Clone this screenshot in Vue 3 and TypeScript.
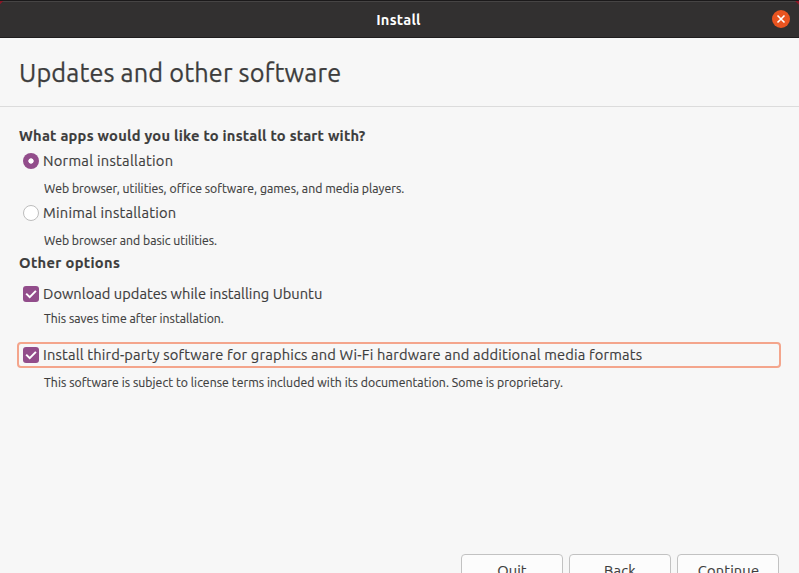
<script setup lang="ts">
import { ref } from 'vue'

const title = 'Updates and other software'
const install = ref<'normal' | 'minimal'>('normal')
const updates = ref(true)
const thirdParty = ref(true)
</script>

<template>
  <main class="window">
    <header class="titlebar">
      <span class="caption">Install</span>
      <button class="close" aria-label="Close">
        <svg width="18" height="18" viewBox="0 0 18 18">
          <circle cx="9" cy="9" r="9" fill="#e95420" />
          <path d="M5.5 5.5l7 7M12.5 5.5l-7 7" stroke="#fff" stroke-width="1.6" />
        </svg>
      </button>
    </header>

    <div class="heading"><h1>{{ title }}</h1></div>

    <section class="content">
      <h2 class="apps">What apps would you like to install to start with?</h2>
      <div class="option normal" @click="install = 'normal'">
        <i class="radio" :class="{ on: install === 'normal' }"></i><span>Normal installation</span>
      </div>
      <p class="normal-note">Web browser, utilities, office software, games, and media players.</p>
      <div class="option minimal" @click="install = 'minimal'">
        <i class="radio" :class="{ on: install === 'minimal' }"></i><span>Minimal installation</span>
      </div>
      <p class="minimal-note">Web browser and basic utilities.</p>
      <h2 class="other">Other options</h2>
      <div class="option updates" @click="updates = !updates">
        <i class="check" :class="{ on: updates }">
          <svg v-if="updates" width="16" height="16" viewBox="0 0 16 16"><path d="M3.2 7.6l3.5 3.5 6.2-6.2" fill="none" stroke="#fff" stroke-width="2" /></svg>
        </i><span>Download updates while installing Ubuntu</span>
      </div>
      <p class="updates-note">This saves time after installation.</p>
      <div class="option third focused" @click="thirdParty = !thirdParty">
        <i class="check" :class="{ on: thirdParty }">
          <svg v-if="thirdParty" width="16" height="16" viewBox="0 0 16 16"><path d="M3.2 7.6l3.5 3.5 6.2-6.2" fill="none" stroke="#fff" stroke-width="2" /></svg>
        </i><span>Install third-party software for graphics and Wi-Fi hardware and additional media formats</span>
      </div>
      <p class="third-note">This software is subject to license terms included with its documentation. Some is proprietary.</p>
    </section>

    <footer class="actions">
      <button class="action quit">Quit</button>
      <button class="action back">Back</button>
      <button class="action continue">Continue</button>
    </footer>
  </main>
</template>

<style>
body { overflow: hidden; }
</style>

<style scoped>
.window {
  display: flex;
  flex-direction: column;
  width: 799px;
  height: 573px;
  overflow: hidden;
  background: #f7f7f7;
  color: #3d3d3d;
  font: 14.667px/20px Ubuntu, "Noto Sans", sans-serif;
  white-space: nowrap;
  -webkit-text-stroke: 0.15px currentColor;
}
.titlebar {
  display: grid;
  grid-template-columns: 1fr auto 1fr;
  align-items: center;
  box-sizing: border-box;
  flex: 0 0 38px;
  padding: 0 9px 0 8px;
  border-top: 1px solid #1b191a;
  border-bottom: 1px solid #1f1d1e;
  background:
    linear-gradient(135deg, #8a1626 2px, transparent 2.5px),
    linear-gradient(225deg, #8a1626 2.5px, transparent 3px),
    linear-gradient(#464444 1px, #323030 1px);
}
.caption {
  grid-column: 2;
  padding-top: 2px;
  margin-right: 1px;
  color: #fff;
  font-weight: 700;
  letter-spacing: 0.25px;
  -webkit-text-stroke: 0;
}
.close {
  display: flex;
  justify-self: end;
  padding: 0;
  border: 0;
  background: none;
}
.heading {
  box-sizing: border-box;
  flex: 0 0 69px;
  padding: 19px 19px 0;
  border-bottom: 1px solid #dcdcdc;
}
h1, h2, p { margin: 0; }
h1 {
  font-size: 25.3px;
  line-height: 32px;
  font-weight: 400;
  letter-spacing: 0.14px;
  -webkit-text-stroke: 0.25px currentColor;
}
.content {
  flex: 0 0 447px;
  box-sizing: border-box;
  padding: 19px 19px 0;
}
h2 {
  font-size: 14.667px;
  line-height: 20px;
  font-weight: 700;
}
.option {
  display: flex;
  align-items: center;
  gap: 4px;
  height: 20px;
  padding-left: 4px;
}
p {
  padding-left: 25px;
  font-size: 12.222px;
  line-height: 16px;
}
.apps { letter-spacing: 0.25px; }
.normal { margin-top: 5px; letter-spacing: 0.28px; }
.normal-note { margin-top: 10px; letter-spacing: 0.033px; }
.minimal { margin-top: 6px; letter-spacing: 0.24px; }
.minimal-note { margin-top: 10px; letter-spacing: 0.01px; }
.other { margin-top: 4px; letter-spacing: 0.35px; }
.updates { margin-top: 11px; letter-spacing: 0.03px; }
.updates-note { margin-top: 7px; letter-spacing: 0.03px; }
.third { margin-top: 15px; letter-spacing: 0.18px; }
.third-note { margin-top: 7px; letter-spacing: 0.07px; }
.focused {
  box-sizing: border-box;
  height: 26px;
  margin-right: -1px;
  margin-left: -2px;
  border: 2px solid #f4a58c;
  border-radius: 4px;
}
.radio, .check {
  display: block;
  box-sizing: border-box;
  flex: 0 0 16px;
  height: 16px;
  border: 1px solid #bdbdbd;
  background: #fff;
}
.radio { border-radius: 50%; }
.radio.on {
  border: 0;
  background: radial-gradient(circle, #fff 2.3px, #924d8b 3px);
}
.check { border-radius: 3px; }
.check.on { border: 0; background: #924d8b; }
.check svg { display: block; }
.actions {
  display: flex;
  justify-content: flex-end;
  gap: 6px;
  padding-right: 20px;
}
.action {
  box-sizing: border-box;
  flex: 0 0 102px;
  height: 34px;
  padding: 0;
  border: 1px solid #c2c2c2;
  border-radius: 4px;
  background: #fcfcfc;
  color: inherit;
  font: inherit;
}
.quit { letter-spacing: 0.1px; }
.back { letter-spacing: 0.2px; }
.continue { padding-left: 1px; letter-spacing: 0.15px; }
</style>
